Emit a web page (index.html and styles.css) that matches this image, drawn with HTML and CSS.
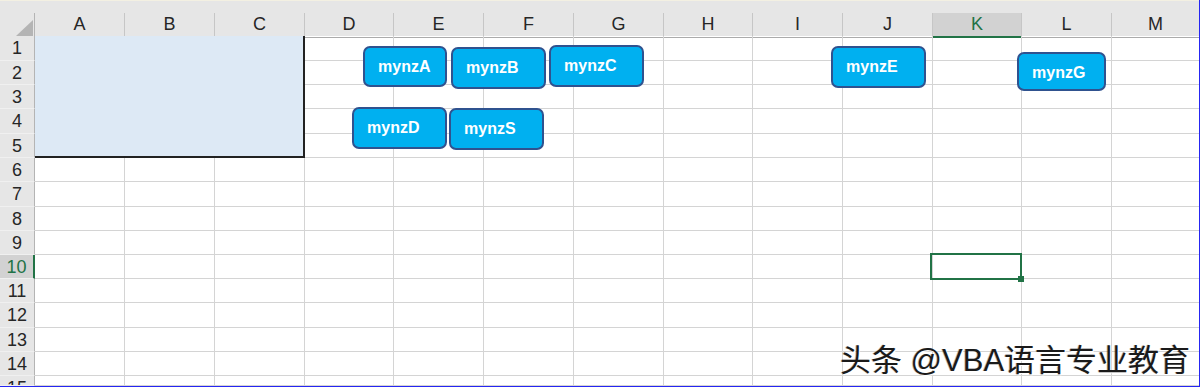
FILE: index.html
```html
<!DOCTYPE html>
<html lang="zh">
<head>
<meta charset="utf-8">
<title>Sheet</title>
<link rel="stylesheet" href="styles.css">
</head>
<body>
<div class="frame">
  <div class="topband"></div>
  <div class="grid-row heads">
    <div class="corner"><svg width="17" height="16" viewBox="0 0 17 16"><polygon points="17,0 17,16 0,16" fill="#b4b4b4"/></svg></div>
    <div class="ch">A</div><div class="ch">B</div><div class="ch">C</div><div class="ch">D</div><div class="ch">E</div><div class="ch">F</div><div class="ch">G</div><div class="ch">H</div><div class="ch">I</div><div class="ch">J</div><div class="ch sel">K</div><div class="ch">L</div><div class="ch last">M</div>
  </div>
  <div class="grid-row h25"><div class="rh">1</div><div class="c"></div><div class="c"></div><div class="c"></div><div class="c"></div><div class="c"></div><div class="c"></div><div class="c"></div><div class="c"></div><div class="c"></div><div class="c"></div><div class="c"></div><div class="c"></div><div class="c"></div></div>
  <div class="grid-row h24"><div class="rh">2</div><div class="c"></div><div class="c"></div><div class="c"></div><div class="c"></div><div class="c"></div><div class="c"></div><div class="c"></div><div class="c"></div><div class="c"></div><div class="c"></div><div class="c"></div><div class="c"></div><div class="c"></div></div>
  <div class="grid-row h24"><div class="rh">3</div><div class="c"></div><div class="c"></div><div class="c"></div><div class="c"></div><div class="c"></div><div class="c"></div><div class="c"></div><div class="c"></div><div class="c"></div><div class="c"></div><div class="c"></div><div class="c"></div><div class="c"></div></div>
  <div class="grid-row h25"><div class="rh">4</div><div class="c"></div><div class="c"></div><div class="c"></div><div class="c"></div><div class="c"></div><div class="c"></div><div class="c"></div><div class="c"></div><div class="c"></div><div class="c"></div><div class="c"></div><div class="c"></div><div class="c"></div></div>
  <div class="grid-row h24"><div class="rh">5</div><div class="c"></div><div class="c"></div><div class="c"></div><div class="c"></div><div class="c"></div><div class="c"></div><div class="c"></div><div class="c"></div><div class="c"></div><div class="c"></div><div class="c"></div><div class="c"></div><div class="c"></div></div>
  <div class="grid-row h24"><div class="rh">6</div><div class="c"></div><div class="c"></div><div class="c"></div><div class="c"></div><div class="c"></div><div class="c"></div><div class="c"></div><div class="c"></div><div class="c"></div><div class="c"></div><div class="c"></div><div class="c"></div><div class="c"></div></div>
  <div class="grid-row h25"><div class="rh">7</div><div class="c"></div><div class="c"></div><div class="c"></div><div class="c"></div><div class="c"></div><div class="c"></div><div class="c"></div><div class="c"></div><div class="c"></div><div class="c"></div><div class="c"></div><div class="c"></div><div class="c"></div></div>
  <div class="grid-row h24"><div class="rh">8</div><div class="c"></div><div class="c"></div><div class="c"></div><div class="c"></div><div class="c"></div><div class="c"></div><div class="c"></div><div class="c"></div><div class="c"></div><div class="c"></div><div class="c"></div><div class="c"></div><div class="c"></div></div>
  <div class="grid-row h24"><div class="rh">9</div><div class="c"></div><div class="c"></div><div class="c"></div><div class="c"></div><div class="c"></div><div class="c"></div><div class="c"></div><div class="c"></div><div class="c"></div><div class="c"></div><div class="c"></div><div class="c"></div><div class="c"></div></div>
  <div class="grid-row h24"><div class="rh sel">10</div><div class="c"></div><div class="c"></div><div class="c"></div><div class="c"></div><div class="c"></div><div class="c"></div><div class="c"></div><div class="c"></div><div class="c"></div><div class="c"></div><div class="c"></div><div class="c"></div><div class="c"></div></div>
  <div class="grid-row h24"><div class="rh">11</div><div class="c"></div><div class="c"></div><div class="c"></div><div class="c"></div><div class="c"></div><div class="c"></div><div class="c"></div><div class="c"></div><div class="c"></div><div class="c"></div><div class="c"></div><div class="c"></div><div class="c"></div></div>
  <div class="grid-row h25"><div class="rh">12</div><div class="c"></div><div class="c"></div><div class="c"></div><div class="c"></div><div class="c"></div><div class="c"></div><div class="c"></div><div class="c"></div><div class="c"></div><div class="c"></div><div class="c"></div><div class="c"></div><div class="c"></div></div>
  <div class="grid-row h24"><div class="rh">13</div><div class="c"></div><div class="c"></div><div class="c"></div><div class="c"></div><div class="c"></div><div class="c"></div><div class="c"></div><div class="c"></div><div class="c"></div><div class="c"></div><div class="c"></div><div class="c"></div><div class="c"></div></div>
  <div class="grid-row h24"><div class="rh">14</div><div class="c"></div><div class="c"></div><div class="c"></div><div class="c"></div><div class="c"></div><div class="c"></div><div class="c"></div><div class="c"></div><div class="c"></div><div class="c"></div><div class="c"></div><div class="c"></div><div class="c"></div></div>
  <div class="grid-row h10"><div class="rh">15</div><div class="c"></div><div class="c"></div><div class="c"></div><div class="c"></div><div class="c"></div><div class="c"></div><div class="c"></div><div class="c"></div><div class="c"></div><div class="c"></div><div class="c"></div><div class="c"></div><div class="c"></div></div>

  <div class="range"></div>
  <div class="active"><div class="handle"></div></div>

  <div class="shape b-a">mynzA</div>
  <div class="shape b-b">mynzB</div>
  <div class="shape b-c">mynzC</div>
  <div class="shape b-d">mynzD</div>
  <div class="shape b-s">mynzS</div>
  <div class="shape b-e">mynzE</div>
  <div class="shape b-g">mynzG</div>

  <div class="wm">头条 @VBA语言专业教育</div>
</div>
</body>
</html>
```

FILE: styles.css
```css
* { box-sizing: border-box; }
html, body { margin: 0; padding: 0; }
body {
  width: 1200px;
  height: 387px;
  overflow: hidden;
  background: #ffffff;
  font-family: "Liberation Sans", Arial, sans-serif;
}
.frame {
  position: relative;
  width: 1200px;
  height: 387px;
  border-right: 1px solid #2626f2;
  border-bottom: 1px solid #2626f2;
  overflow: hidden;
  background: #ffffff;
}
.topband {
  height: 13px;
  background: #e6e6e6;
  border-top: 1px solid #f3f0e2;
}
.grid-row {
  display: grid;
  grid-template-columns: 35px 90px 90px 90px 89px 90px 90px 90px 89px 90px 90px 89px 90px 1fr;
}
.heads { height: 23px; background: #e6e6e6; }
.corner {
  border-right: 1px solid #b4b4b4;
  border-bottom: 1px solid #ababab;
  display: flex;
  align-items: flex-end;
  justify-content: flex-end;
  padding: 0 1px 1px 0;
}
.corner svg { display: block; }
.ch {
  border-right: 1px solid #c6c6c6;
  border-bottom: 1px solid #ababab;
  text-align: center;
  font-size: 18px;
  line-height: 23px;
  color: #262626;
}
.ch.last { border-right: 0; }
.ch.sel {
  background: #d2d2d2;
  color: #217346;
  border-bottom: 2px solid #217346;
}
.h24 { height: 24px; }
.h25 { height: 25px; }
.h10 { height: 10px; }
.rh {
  background: #e6e6e6;
  border-right: 1px solid #b4b4b4;
  border-bottom: 1px solid #f0f0f0;
  text-align: center;
  font-size: 18px;
  line-height: 24px;
  color: #262626;
  overflow: hidden;
}
.rh.sel {
  background: #d2d2d2;
  color: #217346;
  border-right: 2px solid #217346;
}
.c {
  border-right: 1px solid #d4d4d4;
  border-bottom: 1px solid #d4d4d4;
}
.c:last-child { border-right: 0; }

.range {
  position: absolute;
  left: 35px;
  top: 36px;
  width: 270px;
  height: 122px;
  background: #dde9f5;
  border-right: 2px solid #222222;
  border-bottom: 2px solid #222222;
}
.active {
  position: absolute;
  left: 930px;
  top: 253px;
  width: 92px;
  height: 27px;
  border: 2px solid #217346;
}
.handle {
  position: absolute;
  right: -4px;
  bottom: -4px;
  width: 6px;
  height: 6px;
  background: #217346;
}

.shape {
  position: absolute;
  background: #00b0f0;
  border: 2px solid #2f528f;
  border-radius: 7px;
  color: #ffffff;
  font-weight: bold;
  font-size: 16px;
  line-height: 18px;
  padding: 10px 0 0 13px;
  white-space: nowrap;
}
.b-a { left: 363px; top: 46px; width: 84px; height: 41px; }
.b-b { left: 451px; top: 47px; width: 95px; height: 42px; }
.b-c { left: 549px; top: 45px; width: 95px; height: 42px; }
.b-d { left: 352px; top: 107px; width: 95px; height: 42px; }
.b-s { left: 449px; top: 108px; width: 95px; height: 42px; }
.b-e { left: 831px; top: 46px; width: 95px; height: 42px; }
.b-g { left: 1017px; top: 52px; width: 89px; height: 39px; }

.wm {
  position: absolute;
  left: 840px;
  top: 345px;
  font-family: "Liberation Sans", "Noto Sans CJK SC", sans-serif;
  font-size: 31px;
  line-height: 31px;
  color: #1a1a1a;
  white-space: nowrap;
  text-shadow: 1px 1px 0 #ffffff, -1px 0 0 rgba(0, 0, 0, 0.25);
}
```
